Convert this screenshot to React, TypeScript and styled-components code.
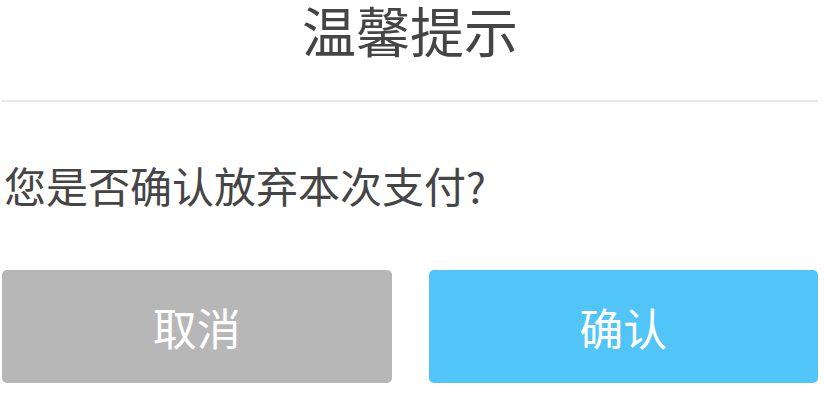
import React from "react";
import styled, { createGlobalStyle } from "styled-components";

const Global = createGlobalStyle`
  html, body { margin: 0; padding: 0; background: #fff; }
  body { font-family: "Noto Sans CJK SC", "Noto Sans", sans-serif; }
`;

const Dialog = styled.div`
  width: 816px;
  margin-left: 2px;
  display: flex;
  flex-direction: column;
`;

const Title = styled.h1`
  margin: 0;
  height: 102px;
  box-sizing: border-box;
  padding-top: 0;
  text-align: center;
  font-size: 54px;
  line-height: 59px;
  font-weight: 400;
  color: #454545;
  border-bottom: 2px solid #e8e8e8;
`;

const Message = styled.p`
  margin: 0;
  padding: 55px 0 0 2px;
  font-size: 42px;
  line-height: 56px;
  color: #454545;
  height: 168px;
  box-sizing: border-box;
`;

const Actions = styled.div`
  display: flex;
  gap: 37px;
`;

const Button = styled.button<{ $variant: "cancel" | "confirm" }>`
  flex: 1;
  height: 113px;
  border: none;
  border-radius: 5px;
  font-family: inherit;
  font-size: 44px;
  color: #fff;
  background: ${(p) => (p.$variant === "confirm" ? "#51c5f7" : "#b8b7b8")};
  display: flex;
  align-items: center;
  justify-content: center;
  padding: 0;
`;

export default function App() {
  return (
    <>
      <Global />
      <Dialog>
        <Title>温馨提示</Title>
        <Message>您是否确认放弃本次支付?</Message>
        <Actions>
          <Button $variant="cancel">取消</Button>
          <Button $variant="confirm">确认</Button>
        </Actions>
      </Dialog>
    </>
  );
}
